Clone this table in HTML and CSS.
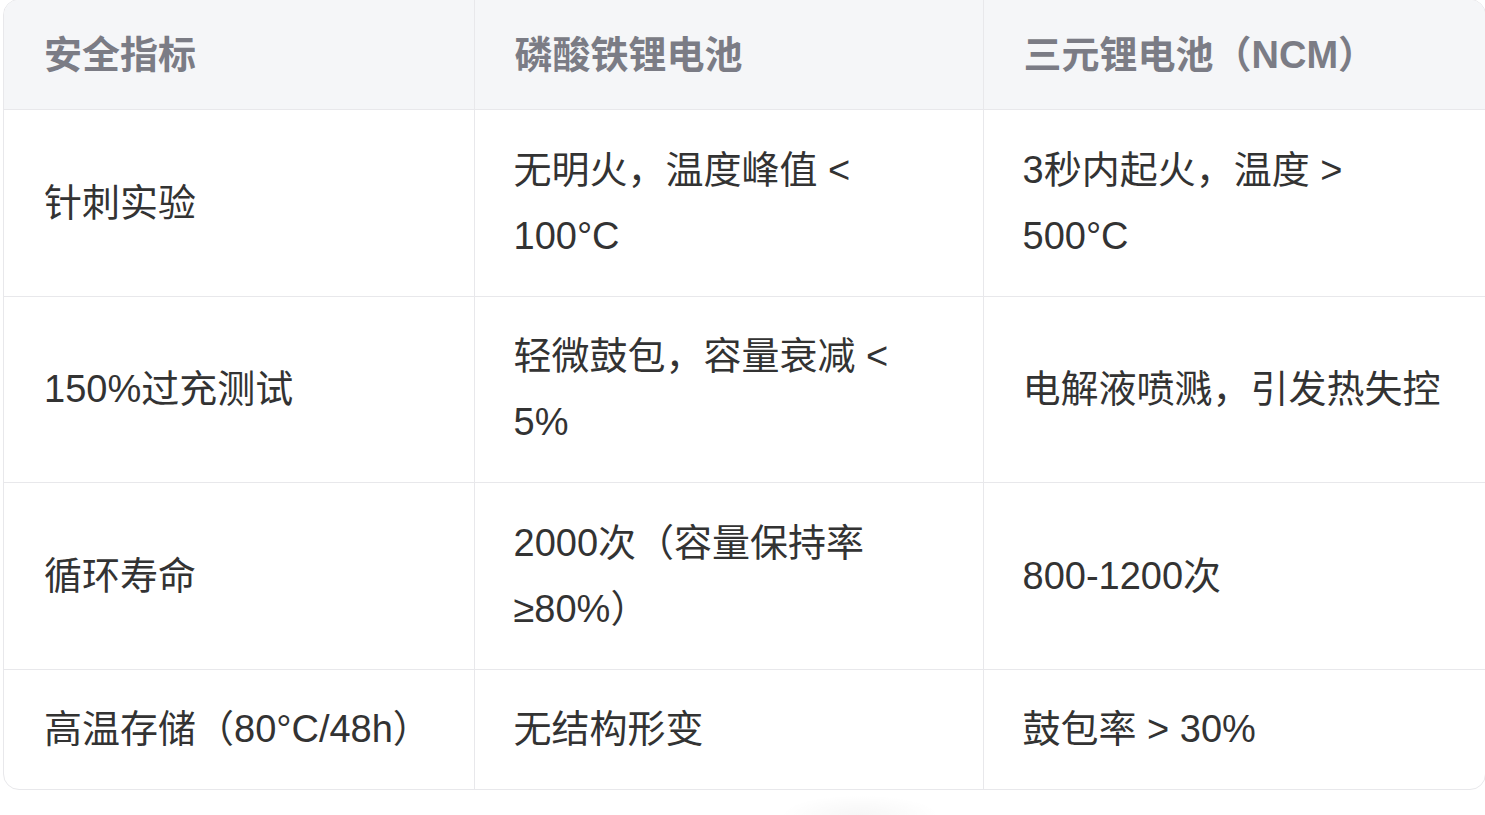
FILE: index.html
```html
<!DOCTYPE html>
<html lang="zh-CN">
<head>
<meta charset="utf-8">
<title>电池安全指标对比</title>
<link rel="stylesheet" href="styles.css">
</head>
<body>
<div class="table-wrap">
  <table class="cmp">
    <colgroup>
      <col class="c1">
      <col class="c2">
      <col class="c3">
    </colgroup>
    <thead>
      <tr>
        <th>安全指标</th>
        <th>磷酸铁锂电池</th>
        <th>三元锂电池（NCM）</th>
      </tr>
    </thead>
    <tbody>
      <tr>
        <td>针刺实验</td>
        <td>无明火，温度峰值 &lt; 100°C</td>
        <td>3秒内起火，温度 &gt; 500°C</td>
      </tr>
      <tr>
        <td>150%过充测试</td>
        <td>轻微鼓包，容量衰减 &lt; 5%</td>
        <td class="nw">电解液喷溅，引发热失控</td>
      </tr>
      <tr>
        <td>循环寿命</td>
        <td>2000次（容量保持率≥80%）</td>
        <td>800-1200次</td>
      </tr>
      <tr>
        <td>高温存储（80°C/48h）</td>
        <td>无结构形变</td>
        <td>鼓包率 &gt; 30%</td>
      </tr>
    </tbody>
  </table>
</div>
<div class="fab-shadow"></div>
</body>
</html>
```

FILE: styles.css
```css
html, body {
  margin: 0;
  padding: 0;
  background: #ffffff;
  overflow: hidden;
}

body {
  position: relative;
  height: 815px;
  font-family: "Liberation Sans", "Noto Sans CJK SC", sans-serif;
  color: #333333;
}

.table-wrap {
  margin-top: -1px;
  margin-left: 3px;
  width: 1483px;
  border: 1px solid #e8e8eb;
  border-radius: 16px;
  overflow: hidden;
  box-sizing: border-box;
}

.cmp {
  width: 100%;
  border-collapse: collapse;
  table-layout: fixed;
  font-size: 38px;
  line-height: 66px;
}

.c1 { width: 470px; }
.c2 { width: 509px; }

.cmp th {
  background: #f5f6f8;
  color: #7b7c85;
  font-weight: 700;
  text-align: left;
  padding: 21.5px 40px 21.5px 40px;
  border-bottom: 1px solid #e8e8eb;
}

.cmp td {
  padding: 26.75px 40px 26.75px 39px;
  vertical-align: middle;
  text-align: left;
  border-top: 1px solid #e8e8eb;
}

.cmp th + th,
.cmp td + td {
  border-left: 1px solid #e8e8eb;
}

.cmp th:first-child,
.cmp td:first-child {
  padding-left: 40px;
}

.cmp tbody tr:first-child td {
  border-top: none;
}

.nw {
  white-space: nowrap;
}

.fab-shadow {
  position: absolute;
  left: 780px;
  top: 795px;
  width: 160px;
  height: 20px;
  background: radial-gradient(ellipse 50% 100% at 50% 100%, rgba(0, 0, 0, 0.035), rgba(0, 0, 0, 0) 100%);
}
```
